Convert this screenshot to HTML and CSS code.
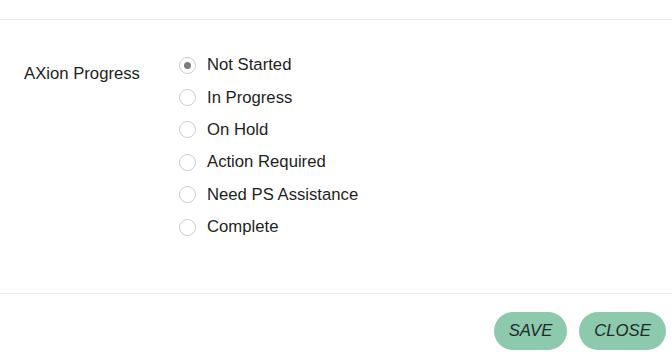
FILE: index.html
```html
<!DOCTYPE html>
<html>
<head>
<meta charset="utf-8">
<link rel="stylesheet" href="styles.css">
</head>
<body>
<div class="dialog">
  <div class="header"></div>
  <div class="content">
    <div class="field-label">AXion Progress</div>
    <div class="options">
      <label class="option"><span class="radio checked"></span><span class="text">Not Started</span></label>
      <label class="option"><span class="radio"></span><span class="text">In Progress</span></label>
      <label class="option"><span class="radio"></span><span class="text">On Hold</span></label>
      <label class="option"><span class="radio"></span><span class="text">Action Required</span></label>
      <label class="option"><span class="radio"></span><span class="text">Need PS Assistance</span></label>
      <label class="option"><span class="radio"></span><span class="text">Complete</span></label>
    </div>
  </div>
  <div class="footer">
    <button class="btn save">SAVE</button>
    <button class="btn close">CLOSE</button>
  </div>
</div>
</body>
</html>
```
FILE: styles.css
```css
html, body {
  margin: 0;
  padding: 0;
  background: #ffffff;
}
body {
  font-family: "Liberation Sans", Arial, sans-serif;
  font-size: 16.7px;
  color: #1e1e1e;
}
.dialog {
  width: 672px;
  height: 358px;
  display: flex;
  flex-direction: column;
}
.header {
  height: 19px;
  border-bottom: 1px solid #e8e8e8;
}
.content {
  display: flex;
  padding: 29px 0 0 24px;
  height: 274px;
  box-sizing: border-box;
  border-bottom: 1px solid #e8e8e8;
}
.field-label {
  width: 155px;
  padding-top: 16px;
  line-height: 18px;
}
.options {
  display: flex;
  flex-direction: column;
}
.option {
  display: flex;
  align-items: center;
  height: 32.4px;
}
.radio {
  width: 17px;
  height: 17px;
  box-sizing: border-box;
  border: 1.5px solid #cacaca;
  border-radius: 50%;
  margin-left: -0.5px;
  margin-right: 11.5px;
  display: flex;
  align-items: center;
  justify-content: center;
  background: #fff;
}
.radio.checked::after {
  content: "";
  width: 7px;
  height: 7px;
  border-radius: 50%;
  background: #7d7d7d;
}
.text {
  line-height: 18px;
}
.footer {
  display: flex;
  justify-content: flex-end;
  padding: 18px 6px 0 0;
  gap: 12px;
}
.btn {
  height: 38px;
  border: none;
  border-radius: 19px;
  background: #8cc9ad;
  color: #1c2b24;
  font-family: "Liberation Sans", Arial, sans-serif;
  font-style: italic;
  font-size: 16.7px;
  padding: 0;
}
.save { width: 73px; }
.close { width: 87px; }
```
